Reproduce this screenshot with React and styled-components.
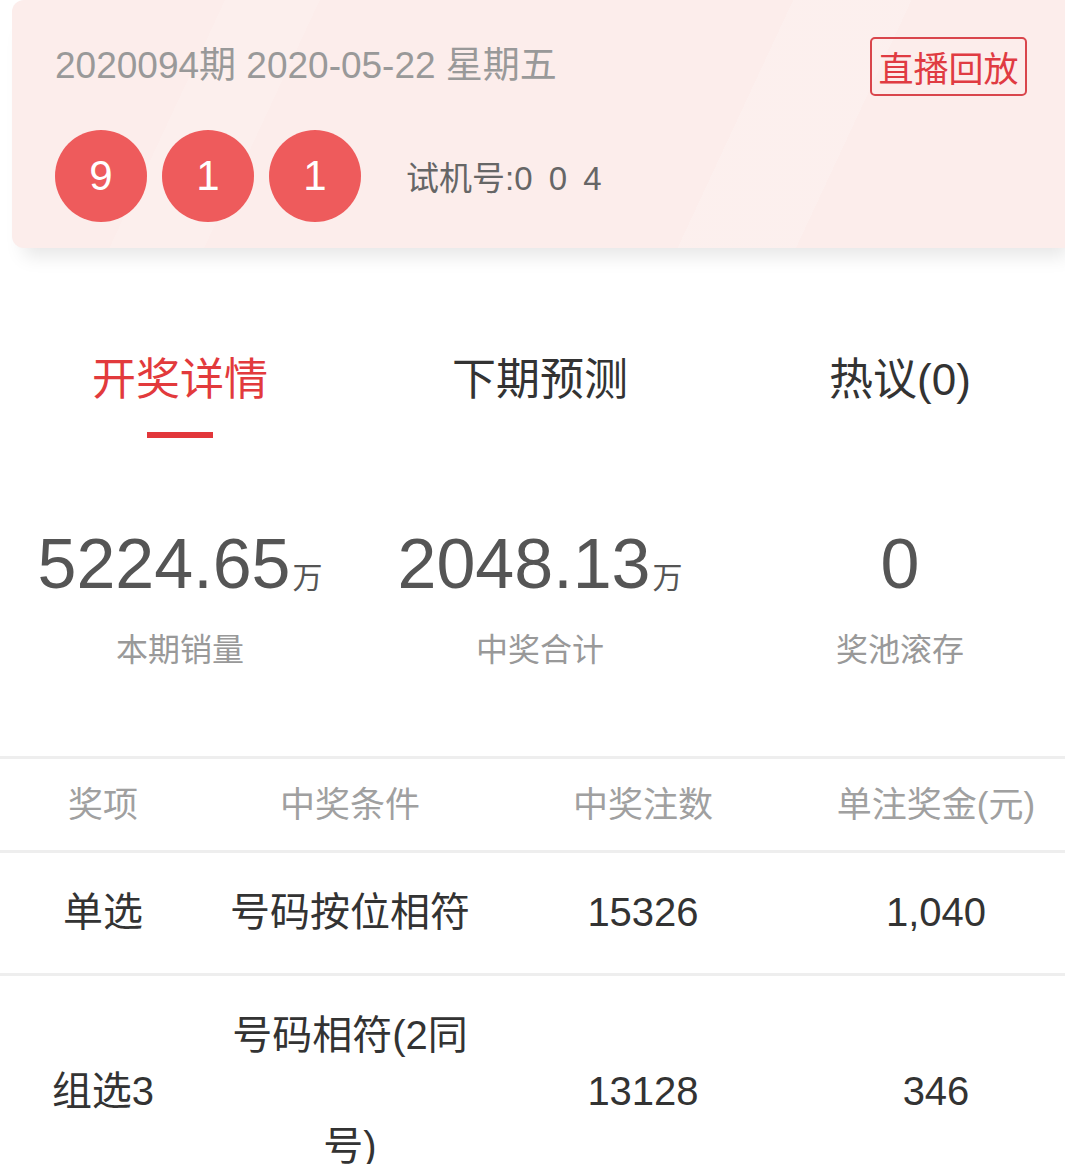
import React from 'react';
import styled, { createGlobalStyle } from 'styled-components';

const GlobalStyle = createGlobalStyle`
  html, body {
    margin: 0;
    padding: 0;
    background: #fff;
    overflow: hidden;
  }
  body {
    font-family: "Liberation Sans", "Noto Sans CJK SC", sans-serif;
  }
`;

const Page = styled.div`
  width: 1080px;
  background: #fff;
`;

const Card = styled.div`
  margin-left: 12px;
  height: 248px;
  box-sizing: border-box;
  padding: 46px 42px 0 43px;
  border-radius: 12px;
  background:
    linear-gradient(115deg, transparent 0 66%, rgba(255, 255, 255, 0.14) 66% 76%, transparent 76%),
    linear-gradient(115deg, transparent 0 18%, rgba(255, 255, 255, 0.12) 18% 26%, transparent 26%),
    #fcedeb;
  box-shadow: 0 20px 18px -12px rgba(0, 0, 0, 0.1);
`;

const TopLine = styled.div`
  display: flex;
  align-items: center;
  justify-content: space-between;
  height: 40px;
`;

const DateText = styled.div`
  font-size: 37px;
  color: #999;
  line-height: 40px;
`;

const ReplayButton = styled.div`
  width: 157px;
  height: 59px;
  box-sizing: border-box;
  border: 2px solid #d9464c;
  border-radius: 5px;
  color: #e03b42;
  font-size: 35px;
  display: flex;
  align-items: center;
  justify-content: center;
  margin-right: 11px;
`;

const BallRow = styled.div`
  display: flex;
  align-items: center;
  gap: 15px;
  margin-top: 44px;
`;

const Ball = styled.div`
  width: 92px;
  height: 92px;
  border-radius: 50%;
  background: #ee5b5c;
  color: #fff;
  font-size: 42px;
  display: flex;
  align-items: center;
  justify-content: center;
`;

const TrialNo = styled.div`
  margin-left: 30px;
  font-size: 33px;
  color: #666;
  word-spacing: 7px;
`;

const Tabs = styled.div`
  display: grid;
  grid-template-columns: repeat(3, 1fr);
  padding-top: 107px;
`;

const Tab = styled.div`
  display: flex;
  flex-direction: column;
  align-items: center;
  gap: 27px;
  font-size: 44px;
  line-height: 50px;
  color: ${(p) => (p.$active ? '#e23a3c' : '#333')};
`;

const Underline = styled.div`
  width: 66px;
  height: 6px;
  background: ${(p) => (p.$show ? '#e2373b' : 'transparent')};
`;

const Stats = styled.div`
  display: grid;
  grid-template-columns: repeat(3, 1fr);
  margin-top: 86px;
`;

const Stat = styled.div`
  display: flex;
  flex-direction: column;
  align-items: center;
`;

const StatValue = styled.div`
  height: 80px;
  font-size: 70px;
  line-height: 80px;
  color: #555;
  span {
    font-size: 30px;
    line-height: 0;
    margin-left: 2px;
  }
`;

const StatLabel = styled.div`
  margin-top: 26px;
  font-size: 32px;
  line-height: 40px;
  color: #999;
`;

const Table = styled.div`
  margin-top: 86px;
  border-top: 3px solid #eee;
`;

const Row = styled.div`
  display: grid;
  grid-template-columns: 206px 288px 298px 288px;
  align-items: center;
  border-bottom: 3px solid #eee;
  box-sizing: border-box;
  min-height: ${(p) => (p.$head ? '94px' : '120px')};
  padding: ${(p) => (p.$head ? '0' : '4px 0 5px')};
`;

const Cell = styled.div`
  text-align: center;
  font-size: ${(p) => (p.$head ? '35px' : '40px')};
  color: ${(p) => (p.$head ? '#a0a0a0' : '#333')};
  line-height: ${(p) => (p.$head ? '40px' : '111px')};
  padding: 0 22px;
  word-break: break-all;
`;

const heads = ['奖项', '中奖条件', '中奖注数', '单注奖金(元)'];
const rows = [
  ['单选', '号码按位相符', '15326', '1,040'],
  ['组选3', '号码相符(2同号)', '13128', '346'],
];

export default function App() {
  return (
    <Page>
      <GlobalStyle />
      <Card>
        <TopLine>
          <DateText>2020094期 2020-05-22 星期五</DateText>
          <ReplayButton>直播回放</ReplayButton>
        </TopLine>
        <BallRow>
          <Ball>9</Ball>
          <Ball>1</Ball>
          <Ball>1</Ball>
          <TrialNo>试机号:0 0 4</TrialNo>
        </BallRow>
      </Card>

      <Tabs>
        <Tab $active>
          开奖详情
          <Underline $show />
        </Tab>
        <Tab>
          下期预测
          <Underline />
        </Tab>
        <Tab>
          热议(0)
          <Underline />
        </Tab>
      </Tabs>

      <Stats>
        <Stat>
          <StatValue>5224.65<span>万</span></StatValue>
          <StatLabel>本期销量</StatLabel>
        </Stat>
        <Stat>
          <StatValue>2048.13<span>万</span></StatValue>
          <StatLabel>中奖合计</StatLabel>
        </Stat>
        <Stat>
          <StatValue>0</StatValue>
          <StatLabel>奖池滚存</StatLabel>
        </Stat>
      </Stats>

      <Table>
        <Row $head>
          {heads.map((h) => (
            <Cell $head key={h}>{h}</Cell>
          ))}
        </Row>
        {rows.map((r) => (
          <Row key={r[0]}>
            {r.map((c, i) => (
              <Cell key={i}>{c}</Cell>
            ))}
          </Row>
        ))}
      </Table>
    </Page>
  );
}
